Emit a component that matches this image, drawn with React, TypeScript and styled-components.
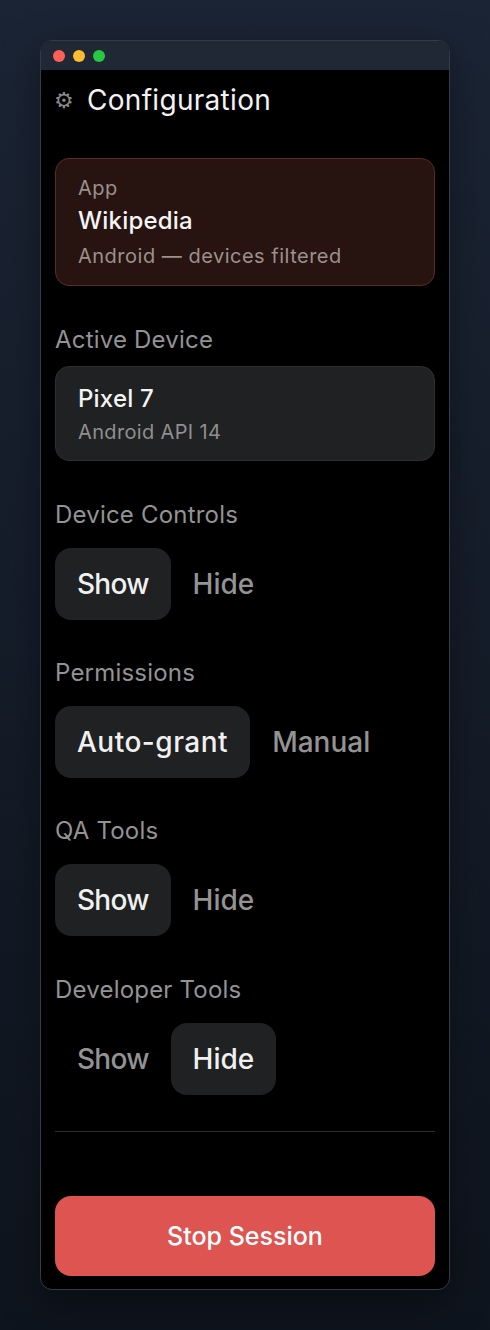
import styled, { createGlobalStyle } from "styled-components";

const FONT = `"Inter", "Noto Sans", sans-serif`;

const GlobalStyle = createGlobalStyle`
  html, body {
    margin: 0;
    padding: 0;
  }
  body {
    width: 490px;
    height: 1330px;
    overflow: hidden;
    font-family: ${FONT};
    background: linear-gradient(180deg, #1b2434 0%, #0e141d 100%);
  }
  * {
    box-sizing: border-box;
  }
`;

const Page = styled.div`
  height: 1330px;
  padding: 40px;
`;

const Window = styled.div`
  height: 1250px;
  display: flex;
  flex-direction: column;
  background: #000;
  border: 1px solid #333b48;
  border-radius: 12px;
  overflow: hidden;
  box-shadow: 0 12px 40px rgba(0, 0, 0, 0.35);
`;

const TitleBar = styled.div`
  height: 29px;
  flex: none;
  display: flex;
  align-items: center;
  gap: 8px;
  padding: 0 12px;
  background: #212835;
`;

const Dot = styled.span<{ $color: string }>`
  width: 12px;
  height: 12px;
  border-radius: 50%;
  background: ${(p) => p.$color};
`;

const Panel = styled.div`
  flex: 1;
  display: flex;
  flex-direction: column;
  padding: 0 14px 13px;
`;

const Heading = styled.h1`
  height: 60px;
  margin: 0 0 28px;
  display: flex;
  align-items: center;
  gap: 14px;
  font-size: 28px;
  font-weight: 400;
  letter-spacing: 0.3px;
  color: #f2f2f2;
`;

const Gear = styled.span`
  width: 18px;
  margin-left: -1px;
  margin-right: 1px;
  font-family: "DejaVu Sans", sans-serif;
  font-size: 22px;
  letter-spacing: 0;
  color: #8a8a8a;
`;

const Card = styled.div<{ $app?: boolean }>`
  display: flex;
  flex-direction: column;
  justify-content: center;
  padding: ${(p) => (p.$app ? "0 22px" : "2px 22px 0")};
  height: ${(p) => (p.$app ? "128px" : "95px")};
  gap: ${(p) => (p.$app ? "4px" : "2px")};
  border-radius: 14px;
  background: ${(p) => (p.$app ? "#27130f" : "#1f2122")};
  border: 1px solid ${(p) => (p.$app ? "#5a2c26" : "#2c2e30")};
`;

const CardSmall = styled.div<{ $warm?: boolean }>`
  font-size: 20px;
  line-height: 28px;
  letter-spacing: ${(p) => (p.$warm ? "0.5px" : "0.35px")};
  color: ${(p) => (p.$warm ? "#9c918e" : "#8f8f8f")};
`;

const CardTitle = styled.div`
  font-size: 24px;
  line-height: 30px;
  font-weight: 450;
  letter-spacing: 0.2px;
  padding-bottom: 2px;
  color: #f4f4f4;
`;

const Section = styled.section<{ $first?: boolean }>`
  margin-top: ${(p) => (p.$first ? "39px" : "38.2px")};
`;

const Label = styled.div<{ $tight?: boolean }>`
  font-size: 24px;
  line-height: 30px;
  letter-spacing: 0.2px;
  color: #939393;
  margin-bottom: ${(p) => (p.$tight ? "11px" : "18px")};
`;

const Row = styled.div`
  display: flex;
`;

const Toggle = styled.div<{ $active?: boolean; $tracking: number }>`
  height: 72px;
  padding: 0 22px;
  display: flex;
  align-items: center;
  border-radius: 16px;
  font-size: 28px;
  font-weight: 450;
  letter-spacing: ${(p) => p.$tracking}px;
  color: ${(p) => (p.$active ? "#f0f0f0" : "#939393")};
  background: ${(p) => (p.$active ? "#1f2122" : "transparent")};
`;

const Divider = styled.hr`
  margin: 36px 0 0;
  border: 0;
  border-top: 1px solid #2e2e2e;
`;

const StopButton = styled.button`
  margin-top: auto;
  height: 80px;
  border: 0;
  border-radius: 16px;
  background: #dd5450;
  color: #fff;
  font-family: ${FONT};
  font-size: 25px;
  font-weight: 450;
`;

// Inter runs a little off the reference's widths on these two words
const tracking: Record<string, number> = {
  Show: -0.75,
  "Auto-grant": 0.5,
};

const controls = [
  { label: "Device Controls", options: ["Show", "Hide"], active: 0 },
  { label: "Permissions", options: ["Auto-grant", "Manual"], active: 0 },
  { label: "QA Tools", options: ["Show", "Hide"], active: 0 },
  { label: "Developer Tools", options: ["Show", "Hide"], active: 1 },
];

export default function App() {
  return (
    <>
      <GlobalStyle />
      <Page>
        <Window>
          <TitleBar>
            <Dot $color="#ff5f57" />
            <Dot $color="#febc2e" />
            <Dot $color="#28c840" />
          </TitleBar>
          <Panel>
            <Heading>
              <Gear>⚙</Gear>
              Configuration
            </Heading>
            <Card $app>
              <CardSmall $warm>App</CardSmall>
              <CardTitle>Wikipedia</CardTitle>
              <CardSmall $warm>Android — devices filtered</CardSmall>
            </Card>
            <Section $first>
              <Label $tight>Active Device</Label>
              <Card>
                <CardTitle>Pixel 7</CardTitle>
                <CardSmall>Android API 14</CardSmall>
              </Card>
            </Section>
            {controls.map((c, idx) => (
              <Section key={c.label} $first={idx === 0}>
                <Label>{c.label}</Label>
                <Row>
                  {c.options.map((o, i) => (
                    <Toggle key={o} $active={i === c.active} $tracking={tracking[o] ?? 0}>
                      {o}
                    </Toggle>
                  ))}
                </Row>
              </Section>
            ))}
            <Divider />
            <StopButton>Stop Session</StopButton>
          </Panel>
        </Window>
      </Page>
    </>
  );
}
